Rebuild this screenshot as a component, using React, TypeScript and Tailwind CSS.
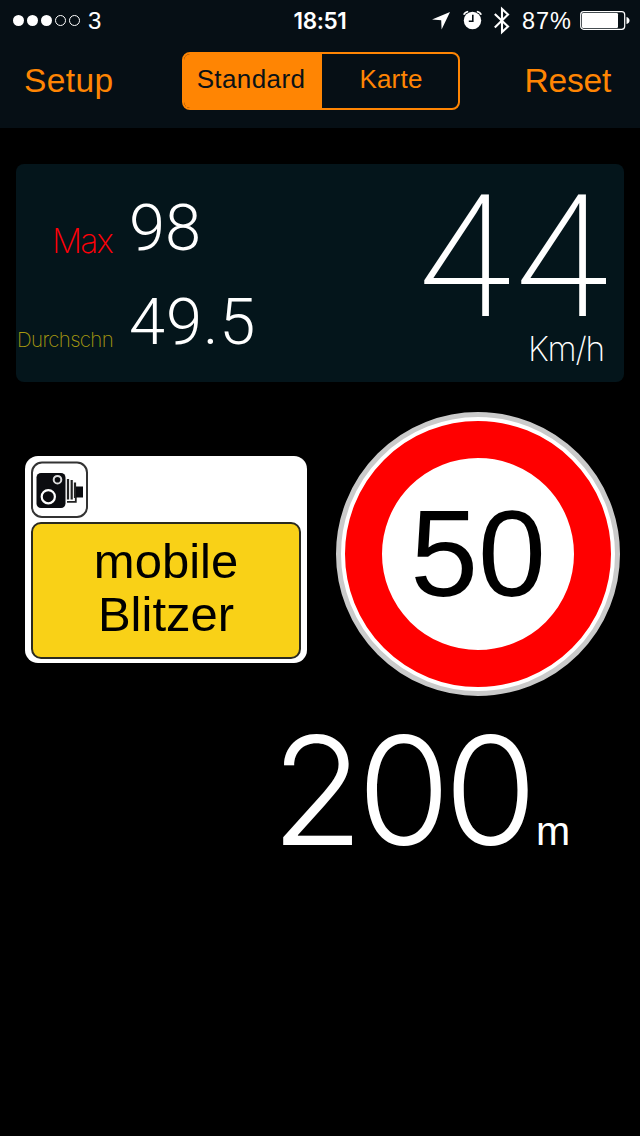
function StatusBar() {
  return (
    <div className="flex h-10 items-center text-white">
      <div className="flex w-[288px] items-center pl-[13px]">
        <div className="flex gap-[3px]">
          <span className="size-[11px] rounded-full bg-white" />
          <span className="size-[11px] rounded-full bg-white" />
          <span className="size-[11px] rounded-full bg-white" />
          <span className="size-[11px] rounded-full border border-white" />
          <span className="size-[11px] rounded-full border border-white" />
        </div>
        <span className="ml-2 pt-0.5 text-[24px] leading-none">3</span>
      </div>
      <div className="w-16 pt-0.5 text-center font-['Inter',sans-serif] text-[22.5px] leading-none font-semibold tracking-[-0.4px] whitespace-nowrap">
        18:51
      </div>
      <svg className="ml-[80px] h-10 w-[18px] shrink-0" viewBox="0 0 18 40" fill="white">
        <path d="M18 12 L9.6 29.6 L9.2 20.3 L0 19.6 Z" />
      </svg>
      <svg className="ml-[13px] h-10 w-5 shrink-0" viewBox="0 0 20 40" fill="none">
        <circle cx="9.5" cy="20.5" r="8.7" fill="white" />
        <path d="M0.8 14.8 Q1.9 12 5.2 11.5 M18.2 14.8 Q17.1 12 13.8 11.5" stroke="white" strokeWidth="1.6" />
        <path d="M9.8 14.8 V21.2 H5.8" stroke="#060f15" strokeWidth="1.6" />
      </svg>
      <svg className="ml-[11px] h-10 w-4 shrink-0" viewBox="0 0 16 40" fill="none">
        <path d="M0.8 14 L14 26.5 L8 32 V9 L14 14.5 L0.8 27.5" stroke="white" strokeWidth="2.1" />
      </svg>
      <span className="ml-3 w-[58px] pt-[3px] text-[23.5px] leading-none tracking-[0.9px] whitespace-nowrap">87%</span>
      <svg className="h-10 w-[50px] shrink-0" viewBox="0 0 50 40" fill="none">
        <rect x="0.7" y="11.7" width="44" height="17.6" rx="3" stroke="white" strokeWidth="1.2" />
        <rect x="2" y="13" width="36" height="15" rx="1.2" fill="white" />
        <path d="M46.5 17 Q49.5 18 49.5 20.5 Q49.5 23 46.5 24 Z" fill="white" />
      </svg>
    </div>
  );
}

function NavBar() {
  return (
    <div className="flex h-[88px] pl-6 text-[#ff8503]">
      <button className="mt-[21px] h-10 w-[158px] text-left text-[33.5px] leading-10 tracking-[0.4px]">Setup</button>
      <div className="mt-3 flex h-[58px] w-[278px] shrink-0 overflow-hidden rounded-[8px] border-2 border-[#ff8503] text-[26px] leading-[50px]">
        <button className="w-[138px] bg-[#ff8503] pr-1 pb-1 text-center tracking-[0.4px] whitespace-nowrap text-[#0b1216]">
          Standard
        </button>
        <button className="flex-1 pb-1 pl-0.5 text-center tracking-[0.2px]">Karte</button>
      </div>
      <button className="mt-[21px] h-10 w-[151px] text-right text-[33.5px] leading-10 tracking-[-0.2px]">Reset</button>
    </div>
  );
}

function SpeedPanel() {
  return (
    <section className="mx-4 mt-9 flex h-[218px] justify-between rounded-[8px] bg-[#04151b] font-['Inter',sans-serif] font-extralight">
      <div className="pt-8">
        <div className="flex h-[94px]">
          <div className="w-24 pt-[28px] text-right text-[33.5px] leading-[34px] tracking-[-1.8px] text-[#ff0008]">Max</div>
          <div className="ml-[17px] font-['Roboto',sans-serif] text-[65px] leading-[64px] font-light text-white">98</div>
        </div>
        <div className="flex">
          <div className="w-[97px] pt-[38px] text-right text-[20.5px] leading-6 tracking-[-0.7px] text-[#a89a10]">Durchschn</div>
          <div className="ml-4 font-['Roboto',sans-serif] text-[65px] leading-[64px] font-light tracking-[0.9px] text-white">49.5</div>
        </div>
      </div>
      <div className="pt-6 pr-3 text-right text-white">
        <div className="font-['Roboto',sans-serif] text-[170px] leading-[140px] tracking-[3.5px]">44</div>
        <div className="mt-1 pr-2 text-[33.5px] leading-[34px] tracking-[-1.2px]">Km/h</div>
      </div>
    </section>
  );
}

function CameraIcon() {
  return (
    <svg className="size-[57px]" viewBox="0 0 57 57" fill="none">
      <rect x="1" y="1.5" width="55" height="54.5" rx="10" fill="white" stroke="#333" strokeWidth="2" />
      <rect x="5.5" y="12" width="29" height="35" rx="4.5" fill="#0b0c10" />
      <circle cx="17.3" cy="35.7" r="6.6" stroke="white" strokeWidth="2.2" />
      <circle cx="26.5" cy="18.7" r="3.8" stroke="#ddd" strokeWidth="2" />
      <path d="M37 18 V38.5 M40.7 19 V38.5 M44 21.5 V37" stroke="#222" strokeWidth="2.2" />
      <path d="M36 40.8 H44.8 V36" stroke="#222" strokeWidth="1.8" />
      <path d="M45 25.5 H52 V36.5 H45 Z" fill="#0b0c10" />
    </svg>
  );
}

function Signs() {
  return (
    <div className="flex pl-[25px] text-black">
      <div className="mt-[74px] h-[207px] w-[282px] rounded-[13px] bg-white pt-[5px] pl-1.5">
        <CameraIcon />
        <div className="mt-1 h-[137px] w-[270px] rounded-[10px] border-2 border-[#2a2a20] bg-[#f9d117] pt-2.5 text-center text-[49px] leading-[54px]">
          <div>mobile</div>
          <div className="-mt-px">Blitzer</div>
        </div>
      </div>
      <div className="mt-[30px] ml-[29px] flex size-[284px] items-center justify-center rounded-full border-[5px] border-[#cacaca] bg-white">
        <div className="flex size-[266px] items-center justify-center rounded-full border-[37px] border-[#ff0000] bg-white text-[122px] leading-none">
          50
        </div>
      </div>
    </div>
  );
}

export default function App() {
  return (
    <main className="h-[1136px] w-[640px] overflow-hidden bg-black font-['Liberation_Sans',Arial,sans-serif]">
      <header className="h-32 bg-[#060f15]">
        <StatusBar />
        <NavBar />
      </header>
      <SpeedPanel />
      <Signs />
      <div className="mt-[22px] flex items-baseline pl-[271px] text-white">
        <span className="w-[265px] font-['Inter',sans-serif] text-[151px] leading-[144px] font-light tracking-[-6.5px]">200</span>
        <span className="text-[41px] leading-none">m</span>
      </div>
    </main>
  );
}
